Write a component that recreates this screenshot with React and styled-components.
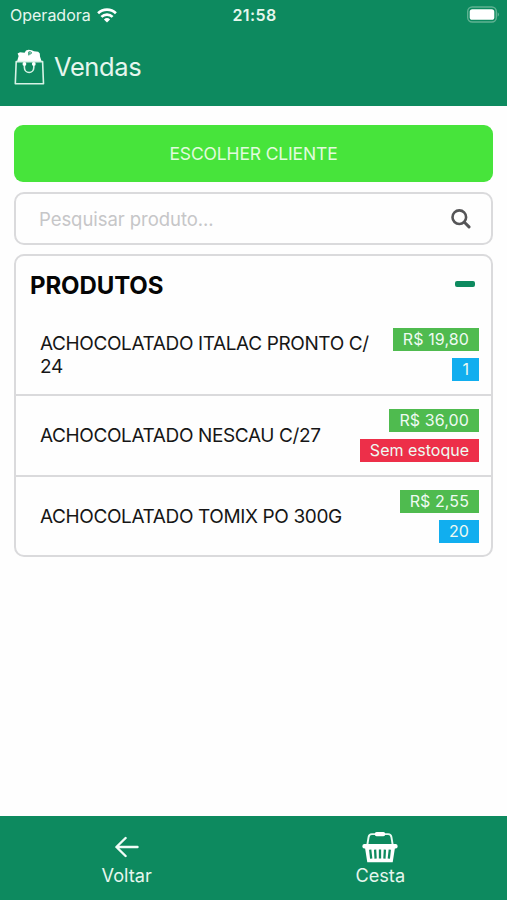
import React from "react";
import styled, { createGlobalStyle } from "styled-components";

const GREEN = "#0d8a5f";
const LINE = "#dadadc";

const GlobalStyle = createGlobalStyle`
  *, *::before, *::after { box-sizing: border-box; }
  body {
    margin: 0;
    background: #fff;
    font-family: Inter, "Liberation Sans", sans-serif;
    color: #161616;
  }
  button, input { font: inherit; }
`;

const Screen = styled.div`
  display: flex;
  flex-direction: column;
  width: 507px;
  height: 900px;
  background: #fefefe;
  overflow: hidden;
`;

const Header = styled.header`
  height: 106px;
  background: ${GREEN};
  color: #e6f6ee;
`;

const StatusBar = styled.div`
  display: grid;
  grid-template-columns: 1fr auto 1fr;
  align-items: center;
  height: 30px;
  padding: 0 8px 0 10px;
  font-size: 16px;
`;

const Carrier = styled.div`
  display: flex;
  align-items: center;
  gap: 6px;
`;

const Clock = styled.div`
  font-weight: 600;
  letter-spacing: 0.4px;
`;

const BatterySlot = styled.div`
  display: flex;
  justify-content: flex-end;
  padding-bottom: 2px;
`;

const TitleRow = styled.div`
  display: flex;
  align-items: center;
  gap: 9px;
  height: 74px;
  padding-left: 14px;
`;

const Title = styled.h1`
  margin: 0;
  font-size: 25.5px;
  line-height: 30px;
  font-weight: 400;
  letter-spacing: -0.4px;
`;

const Content = styled.main`
  flex: 1;
  padding: 19px 14px 0;
`;

const ClientButton = styled.button`
  display: block;
  width: 100%;
  height: 56.5px;
  border: 0;
  border-radius: 9px;
  background: #47e43b;
  color: #e2fbdf;
  font-size: 17.5px;
  letter-spacing: -0.15px;
`;

const SearchField = styled.label`
  display: flex;
  align-items: center;
  height: 53px;
  margin-top: 10.5px;
  padding: 0 20px 0 23px;
  border: 2px solid ${LINE};
  border-radius: 10px;
`;

const SearchInput = styled.input`
  flex: 1;
  min-width: 0;
  padding: 0;
  border: 0;
  outline: 0;
  background: transparent;
  font-size: 18.5px;
  letter-spacing: -0.05px;
  &::placeholder { color: #c6c6c8; opacity: 1; }
`;

const Card = styled.section`
  height: 303px;
  margin-top: 9px;
  border: 2px solid ${LINE};
  border-radius: 10px;
`;

const CardHeader = styled.div`
  display: flex;
  align-items: center;
  justify-content: space-between;
  height: 57px;
  padding: 2px 16px 0 14px;
`;

const CardTitle = styled.h2`
  margin: 0;
  color: #050505;
  font-size: 24px;
  font-weight: 700;
  letter-spacing: -0.1px;
`;

const CollapseBar = styled.span`
  width: 20px;
  height: 6px;
  margin-bottom: 3px;
  border-radius: 2px;
  background: ${GREEN};
`;

const ProductRow = styled.div`
  display: flex;
  align-items: center;
  justify-content: space-between;
  height: 81px;
  padding: 2px 12px 0 24px;
  & + & {
    padding-top: 0;
    border-top: 2px solid ${LINE};
  }
`;

const ProductName = styled.div`
  width: 336px;
  margin-right: -40px;
  font-size: 19px;
  line-height: 23px;
  letter-spacing: -0.38px;
`;

const Badges = styled.div`
  display: flex;
  flex-direction: column;
  align-items: flex-end;
  gap: 7px;
`;

const tones = { price: "#4fbb4f", stock: "#11aeef", empty: "#ed2f49" };

const Badge = styled.span`
  height: 23px;
  padding: 0 10px;
  background: ${(p) => tones[p.$tone]};
  color: #eefaf2;
  font-size: 16px;
  line-height: 23px;
  letter-spacing: ${(p) => (p.$tone === "empty" ? "0" : "0.1px")};
  white-space: nowrap;
`;

const BottomBar = styled.nav`
  display: grid;
  grid-template-columns: 1fr 1fr;
  height: 84px;
  background: ${GREEN};
`;

const Tab = styled.button`
  display: flex;
  flex-direction: column;
  align-items: center;
  padding: 14px 0 0;
  border: 0;
  background: none;
  color: #e6f6ee;
  font-size: 18.2px;
  line-height: 23px;
`;

const TabIcon = styled.span`
  display: flex;
  align-items: center;
  justify-content: center;
  height: 34px;
`;

const WifiIcon = () => (
  <svg width="20" height="15" viewBox="0 0 20 15" fill="none" stroke="#fff" strokeWidth="2.7">
    <path d="M1.1 5.3a12.7 12.7 0 0 1 17.8 0" />
    <path d="M4.4 8.9a8 8 0 0 1 11.2 0" />
    <path d="M10 14.6 6.9 11.5a4.5 4.5 0 0 1 6.2 0z" fill="#fff" stroke="none" />
  </svg>
);

const BatteryIcon = () => (
  <svg width="33" height="17" viewBox="0 0 33 17">
    <rect x="1.7" y="1" width="28.6" height="15" rx="4.5" fill="none" stroke="#5fb292" strokeWidth="1.4" />
    <rect x="3.7" y="3.2" width="24.6" height="10.6" rx="2.6" fill="#fff" />
    <path d="M31.6 6.3q1.4.8 1.4 2.2t-1.4 2.2z" fill="#5fb292" />
  </svg>
);

const BagIcon = () => (
  <svg width="31" height="36" viewBox="0 0 31 36" fill="none">
    <path d="M2.9 13 4.6 7 3.6 4.6 6 3.2 10.6 3.7 12 1.4 14.6.7 17.7 1.2 20 2.2 24.2 2.8 25.8 4.6 26 7.5 27.8 13z" fill="#fff" />
    <path d="M14.8 6.4V2.9h1.6a1 1 0 0 1 0 2h-1.4" stroke={GREEN} strokeWidth="1" />
    <path d="M2.2 12.6h26.4l.9 22.2H1.3z" fill={GREEN} stroke="#d6f2e5" strokeWidth="1.6" strokeLinejoin="round" />
    <path d="M10.4 14.5v4a4.7 5 0 0 0 9.4 0v-4" stroke="#d6f2e5" strokeWidth="1.6" />
    <circle cx="10.4" cy="14.9" r="1.9" fill="#fff" />
    <circle cx="19.8" cy="14.9" r="1.9" fill="#fff" />
  </svg>
);

const SearchIcon = () => (
  <svg width="20" height="20" viewBox="0 0 20 20" fill="none" stroke="#555557" strokeLinecap="round">
    <circle cx="8.3" cy="8.2" r="6.8" strokeWidth="2.6" />
    <path d="m13.4 13.3 4.6 4.6" strokeWidth="3" />
  </svg>
);

const ArrowIcon = () => (
  <svg width="24" height="22" viewBox="0 0 24 22" fill="none" stroke="#f1fcf7" strokeWidth="2.4" strokeLinecap="round" strokeLinejoin="round">
    <path d="M22.5 11H1.6M10.6 2 1.4 11l9.2 9" />
  </svg>
);

const BasketIcon = () => (
  <svg width="36" height="32" viewBox="0 0 36 32" fill="none">
    <path d="M5.2 14.5 6.6 6Q7.1 3.1 9.8 3.1h16.4q2.7 0 3.2 2.9l1.4 8.5" stroke="#e9faf2" strokeWidth="1.9" />
    <rect x="12.8" y=".9" width="10.4" height="4.4" rx="1.8" fill="#fff" />
    <rect x=".4" y="13" width="35.2" height="4.6" rx="2" fill="#fff" />
    <path d="M2.9 16h30.2l-2.4 15.2H5.3z" fill="#fff" />
    <path d="m8.2 18.6 1 9M13.1 18.6l.5 9M18 18.6v9M22.9 18.6l-.5 9M27.8 18.6l-1 9" stroke={GREEN} strokeWidth="2.3" />
  </svg>
);

const products = [
  { name: "ACHOCOLATADO ITALAC PRONTO C/\u200b24", price: "R$ 19,80", stock: 1 },
  { name: "ACHOCOLATADO NESCAU C/27", price: "R$ 36,00", stock: 0 },
  { name: "ACHOCOLATADO TOMIX PO 300G", price: "R$ 2,55", stock: 20 },
];

export default function App() {
  return (
    <Screen>
      <GlobalStyle />
      <Header>
        <StatusBar>
          <Carrier>Operadora <WifiIcon /></Carrier>
          <Clock>21:58</Clock>
          <BatterySlot><BatteryIcon /></BatterySlot>
        </StatusBar>
        <TitleRow>
          <BagIcon />
          <Title>Vendas</Title>
        </TitleRow>
      </Header>
      <Content>
        <ClientButton>ESCOLHER CLIENTE</ClientButton>
        <SearchField>
          <SearchInput placeholder="Pesquisar produto..." />
          <SearchIcon />
        </SearchField>
        <Card>
          <CardHeader>
            <CardTitle>PRODUTOS</CardTitle>
            <CollapseBar />
          </CardHeader>
          {products.map(({ name, price, stock }) => (
            <ProductRow key={name}>
              <ProductName>{name}</ProductName>
              <Badges>
                <Badge $tone="price">{price}</Badge>
                <Badge $tone={stock ? "stock" : "empty"}>{stock || "Sem estoque"}</Badge>
              </Badges>
            </ProductRow>
          ))}
        </Card>
      </Content>
      <BottomBar>
        <Tab><TabIcon><ArrowIcon /></TabIcon>Voltar</Tab>
        <Tab><TabIcon><BasketIcon /></TabIcon>Cesta</Tab>
      </BottomBar>
    </Screen>
  );
}
